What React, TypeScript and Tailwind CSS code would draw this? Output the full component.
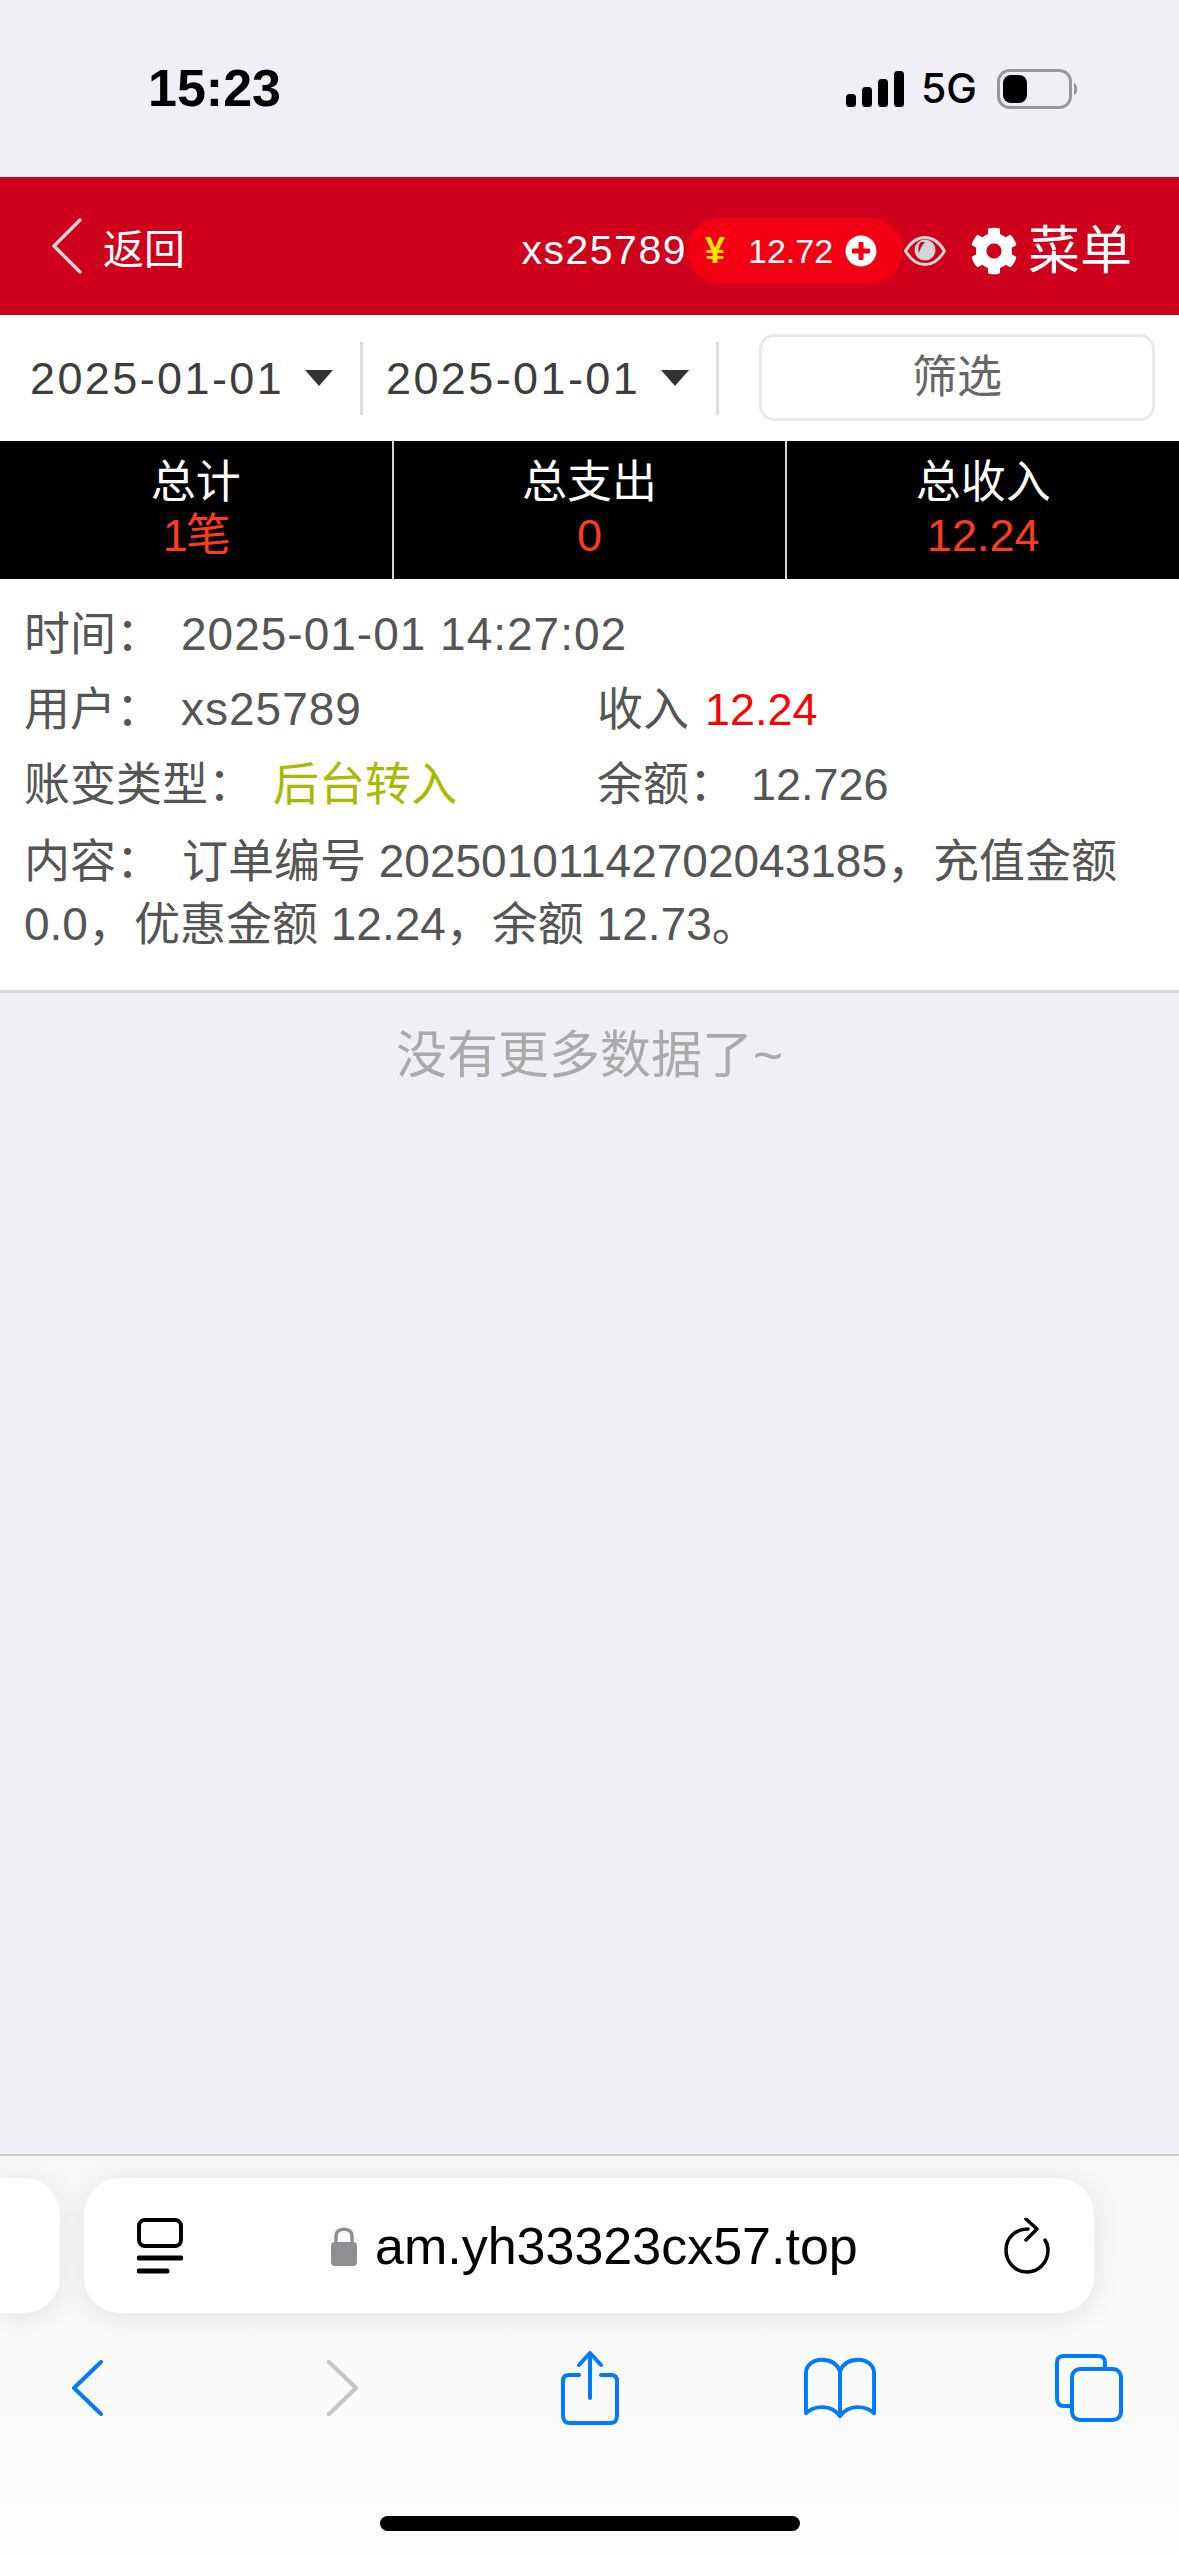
import { FaCog, FaPlusCircle } from "react-icons/fa";

const sans = "font-['Liberation_Sans','Noto_Sans_CJK_SC',sans-serif]";

function SignalBars() {
  return (
    <svg width="60" height="38" viewBox="0 0 60 38" fill="#000">
      <rect x="1" y="24" width="10" height="13" rx="3.5" />
      <rect x="17" y="17" width="10" height="20" rx="3.5" />
      <rect x="33" y="9" width="10" height="28" rx="3.5" />
      <rect x="49" y="1" width="10" height="36" rx="3.5" />
    </svg>
  );
}

function Battery() {
  return (
    <svg width="84" height="40" viewBox="0 0 84 40">
      <rect x="1.5" y="1.5" width="72" height="37" rx="11" fill="none" stroke="#98989c" stroke-width="3" />
      <rect x="6" y="6" width="24" height="28" rx="8" fill="#000" />
      <path d="M77 14 C81 15 81.5 25 77 26 Z" fill="#98989c" />
    </svg>
  );
}

function Triangle() {
  return (
    <svg width="28" height="16" viewBox="0 0 28 16" fill="#333">
      <path d="M0 0 H28 L14 16 Z" />
    </svg>
  );
}

function DatePick({ value }: { value: string }) {
  return (
    <div className="flex h-[73px] w-[333px] items-center justify-between border-r-[3px] border-[#dedede] pr-[27px]">
      <span className="text-[45px] leading-none tracking-[2.4px] text-[#3d3d3d]">{value}</span>
      <Triangle />
    </div>
  );
}

function Stat({ label, children, divided }: { label: string; children: React.ReactNode; divided?: boolean }) {
  return (
    <div className={`flex flex-1 flex-col items-center pt-[13px] ${divided ? "border-r-2 border-[#d8d8d8]" : ""}`}>
      <span className="text-[45px] leading-[57px] text-white">{label}</span>
      <span className="text-[45px] leading-[50px] text-[#ff3b1f]">{children}</span>
    </div>
  );
}

function Row({ children }: { children: React.ReactNode }) {
  return <div className="flex h-[75px] items-center">{children}</div>;
}

export default function App() {
  return (
    <div className={`${sans} flex h-[2556px] w-[1179px] flex-col overflow-hidden bg-[#efeff5]`}>
      {/* status bar */}
      <div className="flex h-[177px] items-start pl-[148px] pt-[61px]">
        <span className="text-[52px] font-bold leading-[54px] text-black">15:23</span>
        <div className="ml-[564px] mt-[7px] flex items-center">
          <SignalBars />
          <span className="ml-[16px] font-['Inter',sans-serif] text-[41px] font-medium leading-none text-black">5G</span>
          <div className="ml-[20px]">
            <Battery />
          </div>
        </div>
      </div>

      {/* page header */}
      <header className="flex h-[138px] items-center bg-[#cf001c] pl-[52px] pr-[47px] pt-[9px]">
        <svg className="-mt-[9px]" width="30" height="56" viewBox="0 0 30 56" fill="none" stroke="#d2d2d2" stroke-width="3.5" stroke-linejoin="round" stroke-linecap="round">
          <path d="M28 2 L2 28 L28 54" />
        </svg>
        <span className="ml-[21px] text-[41px] leading-none text-white">返回</span>
        <span className="ml-auto text-[41px] leading-none tracking-[1.5px] text-white">xs25789</span>
        <div className="flex h-[65px] w-[216px] items-center rounded-full bg-[#f40014] pl-[18px]">
          <span className="text-[36px] font-bold leading-none text-[#ffe600]">¥</span>
          <span className="ml-[23px] text-[34px] leading-none text-white">12.72</span>
          <FaPlusCircle className="ml-[12px] text-white" size={32} />
        </div>
        <svg className="ml-[1px]" width="42" height="30" viewBox="0 0 42 30">
          <path d="M1.5 15 C8 4 15 1.5 21 1.5 C27 1.5 34 4 40.5 15 C34 26 27 28.5 21 28.5 C15 28.5 8 26 1.5 15 Z" fill="none" stroke="#d4d4d4" stroke-width="3" />
          <circle cx="21" cy="14" r="10.5" fill="#d4d4d4" />
          <path d="M17 6 C14 9 14 14 15 17 C16 13 18 9 21 6 Z" fill="#cf001c" />
        </svg>
        <FaCog className="ml-[24px] text-white" size={48} />
        <span className="ml-[10px] text-[52px] leading-none text-white">菜单</span>
      </header>

      {/* date filter */}
      <div className="flex h-[126px] items-center bg-white pl-[30px]">
        <DatePick value="2025-01-01" />
        <div className="ml-[23px]">
          <DatePick value="2025-01-01" />
        </div>
        <button className="ml-[40px] -mt-[2px] h-[87px] w-[396px] rounded-[15px] border-[3px] border-[#e9e9e9] bg-white text-[45px] leading-none text-[#666]">
          筛选
        </button>
      </div>

      {/* totals */}
      <div className="flex h-[138px] bg-black">
        <Stat label="总计" divided>
          <span className="tracking-[-2px]">1笔</span>
        </Stat>
        <Stat label="总支出" divided>
          0
        </Stat>
        <Stat label="总收入">12.24</Stat>
      </div>

      {/* ledger entry */}
      <section className="h-[414px] border-b-[3px] border-[#d9d9de] bg-white pl-[24px] pr-[20px] pt-[18px] text-[46px] text-[#555]">
        <Row>
          <span className="w-[157px]">时间：</span>
          <span className="tracking-[1px]">2025-01-01 14:27:02</span>
        </Row>
        <Row>
          <span className="w-[157px]">用户：</span>
          <span className="w-[416px] tracking-[1px]">xs25789</span>
          <span>收入</span>
          <span className="ml-[16px] text-[45px] text-[#ff0000]">12.24</span>
        </Row>
        <Row>
          <span className="w-[249px]">账变类型：</span>
          <span className="w-[324px] text-[#a8bb00]">后台转入</span>
          <span className="w-[154px]">余额：</span>
          <span className="text-[45px]">12.726</span>
        </Row>
        <p className="mt-[8px] leading-[63px]">
          <span className="mr-[20px]">内容：</span>订单编号 20250101142702043185，充值金额 0.0，优惠金额 12.24，余额 12.73。
        </p>
      </section>

      <p className="pt-[27px] text-center text-[51px] leading-[72px] text-[#aaaaaa]">没有更多数据了~</p>

      {/* browser toolbar */}
      <div className="mt-auto h-[402px] border-t-2 border-[#c8c8cc] bg-gradient-to-b from-[#f6f6f7] to-[#fdfdfe] pt-[22px]">
        <div className="flex h-[135px] gap-[24px]">
          <div className="w-[60px] rounded-r-[36px] bg-white shadow-[0_6px_30px_rgba(0,0,0,0.08)]" />
          <div className="flex w-[1010px] items-center rounded-[36px] bg-white pl-[53px] pr-[44px] shadow-[0_6px_30px_rgba(0,0,0,0.08)]">
            <svg width="46" height="56" viewBox="0 0 46 56" fill="none" stroke="#000" stroke-width="4">
              <rect x="2" y="2" width="42" height="26" rx="6" />
              <path d="M2 40 H44 M2 53 H30" stroke-width="5" stroke-linecap="round" />
            </svg>
            <svg className="ml-[147px]" width="28" height="40" viewBox="0 0 28 40">
              <path d="M6 18 V10 C6 1 22 1 22 10 V18" fill="none" stroke="#8e8e93" stroke-width="3.5" />
              <rect x="1" y="16" width="26" height="24" rx="4" fill="#8e8e93" />
            </svg>
            <span className="ml-[17px] text-[52px] leading-none text-black">am.yh33323cx57.top</span>
            <svg className="ml-auto" width="46" height="56" viewBox="0 0 46 56" fill="none" stroke="#000" stroke-width="3.5" stroke-linecap="round" stroke-linejoin="round">
              <path d="M24 11 C11 11 2 20 2 32 C2 44 11 54 23 54 C35 54 44 44 44 32 C44 28 43 25 41 22" />
              <path d="M22 1 L33 11 L22 22" />
            </svg>
          </div>
        </div>
        <div className="mt-[38px] flex h-[74px] items-center pl-[71px]">
          <svg width="32" height="56" viewBox="0 0 32 56" fill="none" stroke="#007aff" stroke-width="4" stroke-linecap="round" stroke-linejoin="round">
            <path d="M30 2 L3 28 L30 54" />
          </svg>
          <svg className="ml-[224px]" width="32" height="56" viewBox="0 0 32 56" fill="none" stroke="#c4c4c6" stroke-width="4" stroke-linecap="round" stroke-linejoin="round">
            <path d="M2 2 L29 28 L2 54" />
          </svg>
          <svg className="ml-[202px]" width="58" height="74" viewBox="0 0 58 74" fill="none" stroke="#007aff" stroke-width="4" stroke-linecap="round" stroke-linejoin="round">
            <path d="M18 24 H8 C4 24 2 26 2 30 V64 C2 70 4 72 9 72 H49 C54 72 56 70 56 64 V30 C56 26 54 24 50 24 H40" />
            <path d="M29 47 V3 M18 14 L29 2 L40 14" />
          </svg>
          <svg className="ml-[185px]" width="72" height="62" viewBox="0 0 74 62" fill="none" stroke="#007aff" stroke-width="4" stroke-linejoin="round">
            <path d="M37 14 C34 6 27 2 18 2 C10 2 2 7 2 16 V57 C10 49 28 47 37 60 C46 47 64 49 72 57 V16 C72 7 64 2 56 2 C47 2 40 6 37 14 Z M37 14 V58" />
          </svg>
          <svg className="ml-[179px]" width="68" height="68" viewBox="0 0 68 68" fill="none" stroke="#007aff" stroke-width="4">
            <path d="M50 14 V9 C50 4 48 2 43 2 H9 C4 2 2 4 2 9 V44 C2 49 4 52 9 52 H16" />
            <rect x="17" y="15" width="49" height="51" rx="8" />
          </svg>
        </div>
        <div className="mt-[91px] flex justify-center">
          <div className="h-[15px] w-[420px] rounded-full bg-black" />
        </div>
      </div>
    </div>
  );
}
